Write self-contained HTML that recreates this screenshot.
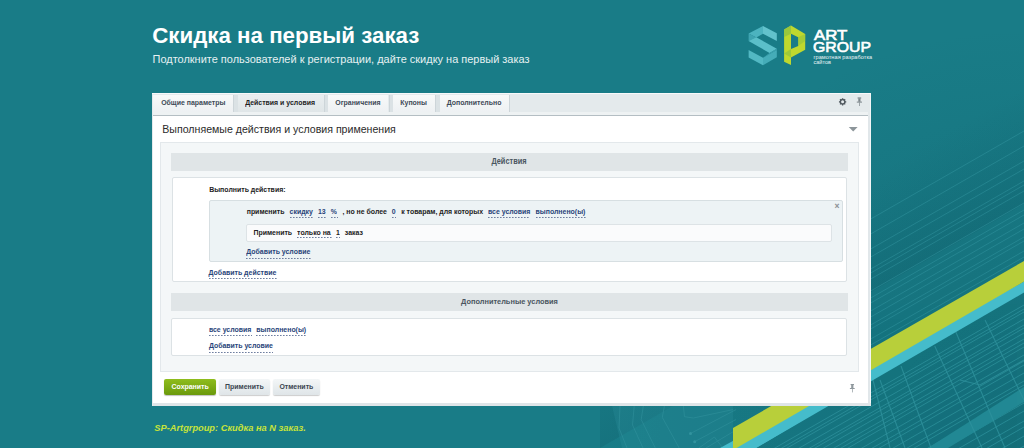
<!DOCTYPE html>
<html><head><meta charset="utf-8"><style>
html,body{margin:0;padding:0}
body{width:1024px;height:448px;overflow:hidden;position:relative;background:#197c87;font-family:"Liberation Sans",sans-serif}
.t{position:absolute;line-height:1;white-space:nowrap}
.r{position:absolute}
.bg{position:absolute;left:0;top:0}
.logo{color:#fff;font-weight:bold;transform-origin:0 0;transform:scaleX(1.12)}
</style></head><body>
<svg class="bg" width="1024" height="448" viewBox="0 0 1024 448">
<defs>
<linearGradient id="vg" x1="0" y1="0" x2="0" y2="1"><stop offset="0" stop-color="#0e5f6b" stop-opacity="0"/><stop offset="1" stop-color="#0e5f6b" stop-opacity="0.25"/></linearGradient>
<clipPath id="below"><polygon points="600,448 1024,204 1024,448"/></clipPath>
</defs>
<radialGradient id="rg" cx="1024" cy="448" r="420" gradientUnits="userSpaceOnUse"><stop offset="0" stop-color="#0b5661" stop-opacity="0.35"/><stop offset="0.6" stop-color="#0b5661" stop-opacity="0.15"/><stop offset="1" stop-color="#0b5661" stop-opacity="0"/></radialGradient>
<rect x="0" y="0" width="1024" height="448" fill="url(#rg)"/>
<linearGradient id="ag" x1="950" y1="303.5" x2="875" y2="173" gradientUnits="userSpaceOnUse"><stop offset="0" stop-color="#0a4f5c" stop-opacity="0.3"/><stop offset="1" stop-color="#0a4f5c" stop-opacity="0"/></linearGradient>
<polygon points="600,448 1024,204 1024,0 780,0 600,300" fill="url(#ag)"/>
<g clip-path="url(#below)">
<g stroke="#2f929d" fill="none" opacity="0.75"><path d="M600 548.4 L1024 305.0" stroke-width="1.0"/><path d="M600 552.4 L1024 309.0" stroke-width="1.0"/><path d="M600 555.4 L1024 312.0" stroke-width="1.0"/><path d="M600 562.4 L1024 319.0" stroke-width="1.0"/><path d="M600 568.4 L1024 325.0" stroke-width="1.0"/><path d="M600 571.4 L1024 328.0" stroke-width="1.0"/><path d="M600 576.4 L1024 333.0" stroke-width="1.0"/><path d="M600 582.4 L1024 339.0" stroke-width="1.0"/><path d="M600 586.4 L1024 343.0" stroke-width="1.0"/><path d="M600 590.4 L1024 347.0" stroke-width="1.0"/><path d="M600 598.4 L1024 355.0" stroke-width="1.0"/><path d="M600 604.4 L1024 361.0" stroke-width="1.0"/><path d="M600 608.4 L1024 365.0" stroke-width="1.0"/><path d="M600 616.4 L1024 373.0" stroke-width="1.0"/><path d="M600 624.4 L1024 381.0" stroke-width="1.0"/><path d="M600 628.4 L1024 385.0" stroke-width="1.0"/><path d="M600 636.4 L1024 393.0" stroke-width="1.0"/><path d="M600 646.4 L1024 403.0" stroke-width="1.0"/><path d="M600 654.4 L1024 411.0" stroke-width="1.0"/><path d="M600 664.4 L1024 421.0" stroke-width="1.0"/><path d="M600 670.4 L1024 427.0" stroke-width="1.0"/><path d="M600 679.4 L1024 436.0" stroke-width="1.0"/><path d="M600 689.4 L1024 446.0" stroke-width="1.0"/><path d="M600 694.4 L1024 451.0" stroke-width="1.0"/></g>
<polygon points="928,448 1024,387 1024,402 948,448" fill="#228994"/>
<g stroke="#2f929d" stroke-width="1.1" fill="none" opacity="0.8">
<path d="M934.7 346 L982 448"/><path d="M901 366 L931 448"/><path d="M955 330 L1005 448"/>
<path d="M880 380 L905 448"/><path d="M985 320 L1024 400"/><path d="M960 380 L980 385 L1024 360"/>
<path d="M863 340 L890 448"/>
</g>
</g>
<g stroke="#3a9ea9" fill="none" opacity="0.5"><path d="M870 345.4 L1024 257.0" stroke-width="0.8"/><path d="M870 339.4 L1024 251.0" stroke-width="0.8"/><path d="M870 329.4 L1024 241.0" stroke-width="0.8"/><path d="M870 325.4 L1024 237.0" stroke-width="0.8"/><path d="M870 317.4 L1024 229.0" stroke-width="0.8"/><path d="M870 311.4 L1024 223.0" stroke-width="0.8"/><path d="M870 303.4 L1024 215.0" stroke-width="0.8"/><path d="M870 298.4 L1024 210.0" stroke-width="0.8"/><path d="M870 291.4 L1024 203.0" stroke-width="0.8"/><path d="M870 279.4 L1024 191.0" stroke-width="0.8"/><path d="M870 273.4 L1024 185.0" stroke-width="0.8"/><path d="M870 269.4 L1024 181.0" stroke-width="0.8"/><path d="M870 257.4 L1024 169.0" stroke-width="0.8"/><path d="M870 249.4 L1024 161.0" stroke-width="0.8"/><path d="M870 234.4 L1024 146.0" stroke-width="0.8"/><path d="M870 219.4 L1024 131.0" stroke-width="0.8"/></g>
<polygon points="612,406 733,406 733,448 622,448" fill="#2a8f9b" opacity="0.3"/>
<g stroke="#32939e" stroke-width="0.9" fill="none" opacity="0.6">
<path d="M664.4 406 L662.3 417.4 L679.2 448"/><path d="M643.3 406 L641.2 419.5 L655.3 448"/><path d="M634.2 406 L632.5 425 L643 448"/>
<path d="M620 406 L619 428 L627 448"/>
<path d="M683.4 406 L684.5 416.7 L693.3 418 L733 409.6"/>
<path d="M690.5 433.5 L736 409.6"/><path d="M694.7 441.7 L736 419.5"/>
<path d="M698.9 448 L714.4 437 L722.8 448"/><path d="M706 448 L736 430"/>
</g>
<circle cx="690.5" cy="433.5" r="1.5" fill="#32939e"/><circle cx="694.7" cy="441.7" r="1.5" fill="#32939e"/>
<polygon points="733,448 733,441 794,406 826.25,406 756,448" fill="#45bccb"/>
<polygon points="1024,281.5 1024,292.5 756,448 720,448" fill="#45bccb"/>
<polygon points="733,428 1024,261 1024,281.5 736.5,448 733,448" fill="#b8cf3a"/>
</svg>
<div class="t " style="left:152.20px;top:25.00px;font-size:22.3px;font-weight:bold;color:#ffffff;">Скидка на первый заказ</div>
<div class="t " style="left:152.50px;top:54.00px;font-size:10.98px;font-weight:normal;color:#e6f1f2;">Подтолкните пользователей к регистрации, дайте скидку на первый заказ</div>
<svg class="bg" width="1024" height="448" viewBox="0 0 1024 448">
<polygon points="748.6,33.5 763,25.9 763,33.8 756.3,37.5" fill="#4cb3bf"/>
<polygon points="763,25.9 776.8,33.3 776.8,41 763,33.8" fill="#62c2cc"/>
<polygon points="748.6,33.5 756.3,37.5 748.6,41.1" fill="#3ea4b1"/>
<polygon points="748.6,41.1 756.3,37.3 776.8,48.8 769.6,53" fill="#5bbfc9"/>
<polygon points="769.6,53 776.8,48.8 776.8,50.1 763,57.8" fill="#3ea4b1"/>
<polygon points="748.6,49.9 763,57.8 763,65.3 748.6,57.6" fill="#52b8c3"/>
<polygon points="763,57.8 776.8,50.1 776.8,57.3 763,65.3" fill="#45acb8"/>
<path fill-rule="evenodd" fill="#bfd82e" d="M784.1,29.45 L791,25.6 L805.2,34.1 L805.2,49.65 L791,57.4 L791,65.1 L784.1,61.7 Z M791,33.8 L798.2,37.2 L798.2,46 L791,49.1 Z"/>
<polygon points="784.1,29.45 791,25.6 791,33.8 784.1,37" fill="#93c43e" opacity="0.85"/>
<polygon points="798.2,37.2 805.2,34.1 805.2,41 798.2,46" fill="#93c43e" opacity="0.6"/>
<polygon points="784.1,53.5 791,49.1 791,57.4" fill="#93c43e" opacity="0.75"/>
</svg>
<div class="t " style="left:813.90px;top:28.00px;font-size:14px;font-weight:normal;color:#fff;transform-origin:0 0;transform:scaleX(1.2);-webkit-text-stroke:0.6px #fff">ART</div>
<div class="t " style="left:813.00px;top:40.00px;font-size:14px;font-weight:normal;color:#fff;transform-origin:0 0;transform:scaleX(1.128);-webkit-text-stroke:0.6px #fff">GROUP</div>
<div class="t " style="left:813.40px;top:55.00px;font-size:5.6px;font-weight:normal;color:#e8f3f4;transform-origin:0 4px;transform:scaleY(1.1);letter-spacing:0.05px">грамотная разработка</div>
<div class="t " style="left:813.40px;top:60.00px;font-size:5.6px;font-weight:normal;color:#e8f3f4;transform-origin:0 4px;transform:scaleY(1.1);">сайтов</div>
<div class="r" style="left:152px;top:93px;width:719px;height:313px;background:#e4eaec"></div>
<div class="r" style="left:152px;top:93px;width:719px;height:1px;background:#f7f9fa"></div>
<div class="r" style="left:153.4px;top:94.5px;width:79.6px;height:17.5px;background:linear-gradient(#f7f9f9,#eef1f3)"></div>
<div class="r" style="left:233px;top:94.5px;width:4.5px;height:17.5px;background:#dbe2e5"></div>
<div class="r" style="left:233px;top:94.5px;width:1px;height:17.5px;background:#cdd5d9"></div>
<div class="t " style="left:161.20px;top:100.00px;font-size:6.95px;font-weight:bold;color:#3d4956;transform-origin:0 5px;transform:scaleY(1.1);">Общие параметры</div>
<div class="r" style="left:237.6px;top:94.5px;width:86.00000000000003px;height:17.5px;background:linear-gradient(#e9eef0,#e0e6e8)"></div>
<div class="r" style="left:323.6px;top:94.5px;width:4.5px;height:17.5px;background:#dbe2e5"></div>
<div class="r" style="left:323.6px;top:94.5px;width:1.0px;height:17.5px;background:#cdd5d9"></div>
<div class="t " style="left:245.20px;top:100.00px;font-size:6.95px;font-weight:bold;color:#1e1e1e;transform-origin:0 5px;transform:scaleY(1.1);">Действия и условия</div>
<div class="r" style="left:327.6px;top:94.5px;width:60.89999999999998px;height:17.5px;background:linear-gradient(#f7f9f9,#eef1f3)"></div>
<div class="r" style="left:388.5px;top:94.5px;width:4.5px;height:17.5px;background:#dbe2e5"></div>
<div class="r" style="left:388.5px;top:94.5px;width:1.0px;height:17.5px;background:#cdd5d9"></div>
<div class="t " style="left:335.30px;top:100.00px;font-size:6.95px;font-weight:bold;color:#3d4956;transform-origin:0 5px;transform:scaleY(1.1);">Ограничения</div>
<div class="r" style="left:392.5px;top:94.5px;width:42.5px;height:17.5px;background:linear-gradient(#f7f9f9,#eef1f3)"></div>
<div class="r" style="left:435px;top:94.5px;width:4.5px;height:17.5px;background:#dbe2e5"></div>
<div class="r" style="left:435px;top:94.5px;width:1px;height:17.5px;background:#cdd5d9"></div>
<div class="t " style="left:400.30px;top:100.00px;font-size:6.95px;font-weight:bold;color:#3d4956;transform-origin:0 5px;transform:scaleY(1.1);">Купоны</div>
<div class="r" style="left:439.7px;top:94.5px;width:69.30000000000001px;height:17.5px;background:linear-gradient(#f7f9f9,#eef1f3)"></div>
<div class="r" style="left:509px;top:94.5px;width:1px;height:17.5px;background:#cdd5d9"></div>
<div class="t " style="left:446.70px;top:100.00px;font-size:6.95px;font-weight:bold;color:#3d4956;transform-origin:0 5px;transform:scaleY(1.1);">Дополнительно</div>
<div class="r" style="left:153px;top:112px;width:715px;height:3px;background:#eef2f3"></div>
<div class="r" style="left:153px;top:115px;width:715px;height:1px;background:#b4bec3"></div>
<svg class="bg" width="1024" height="448" viewBox="0 0 1024 448">
<path d="M846.25,101.17 L846.25,102.43 L845.53,102.46 L845.14,103.40 L845.62,103.94 L844.74,104.82 L844.20,104.34 L843.26,104.73 L843.23,105.45 L841.97,105.45 L841.94,104.73 L841.00,104.34 L840.46,104.82 L839.58,103.94 L840.06,103.40 L839.67,102.46 L838.95,102.43 L838.95,101.17 L839.67,101.14 L840.06,100.20 L839.58,99.66 L840.46,98.78 L841.00,99.26 L841.94,98.87 L841.97,98.15 L843.23,98.15 L843.26,98.87 L844.20,99.26 L844.74,98.78 L845.62,99.66 L845.14,100.20 L845.53,101.14 Z" fill="#50595f"/>
<circle cx="842.6" cy="101.8" r="1.5" fill="#e6ebed"/>
<g fill="#7d868b"><rect x="857.6" y="97.4" width="3.6" height="1.2"/><rect x="858.3" y="98.4" width="2.2" height="3.4"/><rect x="856.8" y="101.6" width="5.2" height="1"/><rect x="859.1" y="102.4" width="0.7" height="3.6"/></g>
</svg>
<div class="r" style="left:153px;top:116px;width:715px;height:286.8px;background:#ffffff"></div>
<div class="r" style="left:868px;top:116px;width:2px;height:286.8px;background:#e1e7ea"></div>
<div class="r" style="left:870px;top:93px;width:1px;height:313px;background:#f3f6f7"></div>
<div class="r" style="left:153px;top:402.8px;width:718px;height:3.1999999999999886px;background:#dfe5e8"></div>
<div class="t " style="left:162.30px;top:124.00px;font-size:10.6px;font-weight:normal;color:#2b2b2b;">Выполняемые действия и условия применения</div>
<svg class="bg" width="1024" height="448"><polygon points="848.75,127 857.6,127 853.2,131.6" fill="#8c959a"/></svg>
<div class="r" style="left:160px;top:142px;width:698.5px;height:229.5px;background:#f4f7f8;border:1px solid #e3e8eb;box-sizing:border-box"></div>
<div class="r" style="left:171px;top:153px;width:677px;height:18px;background:#e0e5e7"></div>
<div class="t " style="left:491.40px;top:158.00px;font-size:7.4px;font-weight:bold;color:#4a5560;transform-origin:0 6px;transform:scaleY(1.1);">Действия</div>
<div class="r" style="left:171.5px;top:177px;width:675.5px;height:104.5px;background:#fff;border:1px solid #dce2e5;border-radius:2px;box-sizing:border-box"></div>
<div class="t " style="left:209.20px;top:187.00px;font-size:6.95px;font-weight:bold;color:#222;transform-origin:0 5px;transform:scaleY(1.1);">Выполнить действия:</div>
<div class="r" style="left:209.4px;top:200.4px;width:633.4px;height:61.400000000000006px;background:#edf3f5;border:1px solid #d7dfe2;border-radius:2px;box-sizing:border-box"></div>
<div class="t " style="left:834.40px;top:202.00px;font-size:8.5px;font-weight:normal;color:#8a8f93;-webkit-text-stroke:0.3px #8a8f93">×</div>
<div class="t " style="left:246.70px;top:209.00px;font-size:6.95px;font-weight:bold;color:#222;transform-origin:0 5px;transform:scaleY(1.1);">применить</div>
<div class="t " style="left:289.60px;top:209.00px;font-size:6.95px;font-weight:bold;color:#284479;transform-origin:0 5px;transform:scaleY(1.1);">скидку</div>
<div class="r" style="left:290px;top:217px;width:24px;height:1px;background:repeating-linear-gradient(90deg,#6f7fa0 0 1px,#6f7fa099 1px 2px,transparent 2px 3px)"></div>
<div class="t " style="left:318.00px;top:209.00px;font-size:6.95px;font-weight:bold;color:#284479;transform-origin:0 5px;transform:scaleY(1.1);">13</div>
<div class="r" style="left:318px;top:217px;width:8px;height:1px;background:repeating-linear-gradient(90deg,#6f7fa0 0 1px,#6f7fa099 1px 2px,transparent 2px 3px)"></div>
<div class="t " style="left:330.80px;top:209.00px;font-size:6.95px;font-weight:bold;color:#284479;transform-origin:0 5px;transform:scaleY(1.1);">%</div>
<div class="r" style="left:331px;top:217px;width:7px;height:1px;background:repeating-linear-gradient(90deg,#6f7fa0 0 1px,#6f7fa099 1px 2px,transparent 2px 3px)"></div>
<div class="t " style="left:342.40px;top:209.00px;font-size:6.95px;font-weight:bold;color:#222;transform-origin:0 5px;transform:scaleY(1.1);">, но не более</div>
<div class="t " style="left:391.70px;top:209.00px;font-size:6.95px;font-weight:bold;color:#284479;transform-origin:0 5px;transform:scaleY(1.1);">0</div>
<div class="r" style="left:392px;top:217px;width:4px;height:1px;background:repeating-linear-gradient(90deg,#6f7fa0 0 1px,#6f7fa099 1px 2px,transparent 2px 3px)"></div>
<div class="t " style="left:401.20px;top:209.00px;font-size:6.95px;font-weight:bold;color:#222;transform-origin:0 5px;transform:scaleY(1.1);">к товарам, для которых</div>
<div class="t " style="left:488.00px;top:209.00px;font-size:6.95px;font-weight:bold;color:#284479;transform-origin:0 5px;transform:scaleY(1.1);">все условия</div>
<div class="r" style="left:488px;top:217px;width:42px;height:1px;background:repeating-linear-gradient(90deg,#6f7fa0 0 1px,#6f7fa099 1px 2px,transparent 2px 3px)"></div>
<div class="t " style="left:535.50px;top:209.00px;font-size:6.95px;font-weight:bold;color:#284479;transform-origin:0 5px;transform:scaleY(1.1);">выполнено(ы)</div>
<div class="r" style="left:536px;top:217px;width:50px;height:1px;background:repeating-linear-gradient(90deg,#6f7fa0 0 1px,#6f7fa099 1px 2px,transparent 2px 3px)"></div>
<div class="r" style="left:246.3px;top:223.6px;width:586.0px;height:18.200000000000017px;background:#fafbfc;border:1px solid #dde3e6;border-radius:2px;box-sizing:border-box"></div>
<div class="t " style="left:253.50px;top:230.00px;font-size:6.95px;font-weight:bold;color:#222;transform-origin:0 5px;transform:scaleY(1.1);">Применить</div>
<div class="t " style="left:297.10px;top:230.00px;font-size:6.95px;font-weight:bold;color:#222;transform-origin:0 5px;transform:scaleY(1.1);">только на</div>
<div class="r" style="left:297px;top:237px;width:35px;height:1px;background:repeating-linear-gradient(90deg,#6f7fa0 0 1px,#6f7fa099 1px 2px,transparent 2px 3px)"></div>
<div class="t " style="left:336.00px;top:230.00px;font-size:6.95px;font-weight:bold;color:#222;transform-origin:0 5px;transform:scaleY(1.1);">1</div>
<div class="r" style="left:336px;top:237px;width:4px;height:1px;background:repeating-linear-gradient(90deg,#6f7fa0 0 1px,#6f7fa099 1px 2px,transparent 2px 3px)"></div>
<div class="t " style="left:344.80px;top:230.00px;font-size:6.95px;font-weight:bold;color:#222;transform-origin:0 5px;transform:scaleY(1.1);">заказ</div>
<div class="t " style="left:246.30px;top:249.00px;font-size:6.95px;font-weight:bold;color:#284479;transform-origin:0 5px;transform:scaleY(1.1);">Добавить условие</div>
<div class="r" style="left:246px;top:258px;width:65px;height:1px;background:repeating-linear-gradient(90deg,#6f7fa0 0 1px,#6f7fa099 1px 2px,transparent 2px 3px)"></div>
<div class="t " style="left:208.60px;top:270.00px;font-size:6.95px;font-weight:bold;color:#284479;transform-origin:0 5px;transform:scaleY(1.1);">Добавить действие</div>
<div class="r" style="left:209px;top:278px;width:68px;height:1px;background:repeating-linear-gradient(90deg,#6f7fa0 0 1px,#6f7fa099 1px 2px,transparent 2px 3px)"></div>
<div class="r" style="left:171px;top:293px;width:677px;height:18px;background:#e0e5e7"></div>
<div class="t" style="left:171px;width:677px;text-align:center;top:298px;font-size:7.4px;font-weight:bold;color:#4a5560">Дополнительные условия</div>
<div class="r" style="left:171.2px;top:317.5px;width:675.8px;height:38.0px;background:#fff;border:1px solid #dce2e5;border-radius:2px;box-sizing:border-box"></div>
<div class="t " style="left:208.90px;top:327.00px;font-size:6.95px;font-weight:bold;color:#284479;transform-origin:0 5px;transform:scaleY(1.1);">все условия</div>
<div class="r" style="left:209px;top:335px;width:43px;height:1px;background:repeating-linear-gradient(90deg,#6f7fa0 0 1px,#6f7fa099 1px 2px,transparent 2px 3px)"></div>
<div class="t " style="left:256.30px;top:327.00px;font-size:6.95px;font-weight:bold;color:#284479;transform-origin:0 5px;transform:scaleY(1.1);">выполнено(ы)</div>
<div class="r" style="left:256px;top:335px;width:50px;height:1px;background:repeating-linear-gradient(90deg,#6f7fa0 0 1px,#6f7fa099 1px 2px,transparent 2px 3px)"></div>
<div class="t " style="left:208.90px;top:343.00px;font-size:6.95px;font-weight:bold;color:#284479;transform-origin:0 5px;transform:scaleY(1.1);">Добавить условие</div>
<div class="r" style="left:209px;top:352px;width:64px;height:1px;background:repeating-linear-gradient(90deg,#6f7fa0 0 1px,#6f7fa099 1px 2px,transparent 2px 3px)"></div>
<div class="r" style="left:164.4px;top:379.2px;width:52.099999999999994px;height:15.800000000000011px;background:linear-gradient(#8fbd1d,#6a990c);border-radius:2px;box-shadow:0 1px 1px rgba(0,0,0,0.25)"></div>
<div class="t " style="left:171.60px;top:384.00px;font-size:6.95px;font-weight:bold;color:#ffffff;transform-origin:0 5px;transform:scaleY(1.1);">Сохранить</div>
<div class="r" style="left:218.8px;top:379.2px;width:51.5px;height:15.800000000000011px;background:linear-gradient(#f3f6f7,#dfe5e8);border-radius:2px;box-shadow:0 1px 1px rgba(0,0,0,0.2)"></div>
<div class="t " style="left:225.10px;top:384.00px;font-size:6.95px;font-weight:bold;color:#3b4650;transform-origin:0 5px;transform:scaleY(1.1);">Применить</div>
<div class="r" style="left:272.5px;top:379.2px;width:47.60000000000002px;height:15.800000000000011px;background:linear-gradient(#f3f6f7,#dfe5e8);border-radius:2px;box-shadow:0 1px 1px rgba(0,0,0,0.2)"></div>
<div class="t " style="left:279.40px;top:384.00px;font-size:6.95px;font-weight:bold;color:#3b4650;transform-origin:0 5px;transform:scaleY(1.1);">Отменить</div>
<svg class="bg" width="1024" height="448">
<g fill="#8f989d"><rect x="850.6" y="384" width="3.4" height="1.1"/><rect x="851.2" y="385" width="2.2" height="3.2"/><rect x="849.9" y="388" width="4.8" height="1"/><rect x="852" y="388.8" width="0.7" height="3.6"/></g>
</svg>
<div class="t " style="left:154.30px;top:424.00px;font-size:9.28px;font-weight:bold;color:#c6e33a;font-style:italic">SP-Artgrpoup: Скидка на N заказ.</div>
</body></html>
